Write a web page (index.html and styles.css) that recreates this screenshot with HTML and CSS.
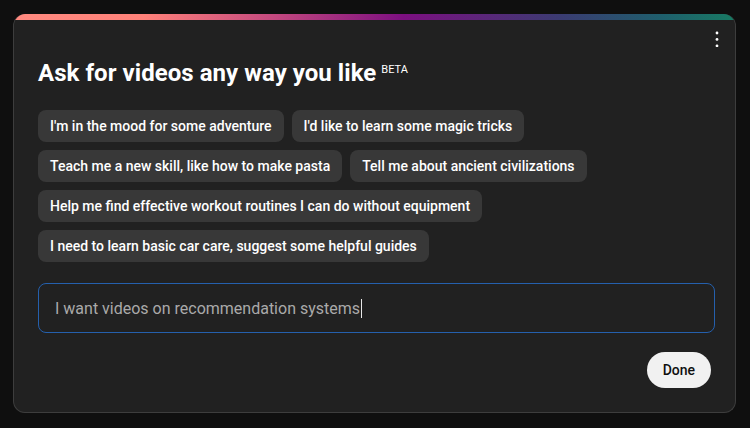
FILE: index.html
```html
<!DOCTYPE html>
<html>
<head>
<meta charset="utf-8">
<link rel="stylesheet" href="styles.css">
</head>
<body>
<div class="card">
  <div class="bar"></div>
  <button class="kebab" aria-label="More">
    <svg width="4" height="16" viewBox="0 0 4 16"><circle cx="2" cy="2" r="1.4" fill="#fff"/><circle cx="2" cy="8.4" r="1.4" fill="#fff"/><circle cx="2" cy="14.8" r="1.4" fill="#fff"/></svg>
  </button>
  <div class="body">
    <h1 class="title">Ask for videos any way you like<sup class="beta">BETA</sup></h1>
    <div class="chips">
      <span class="chip">I'm in the mood for some adventure</span>
      <span class="chip">I'd like to learn some magic tricks</span>
      <span class="chip">Teach me a new skill, like how to make pasta</span>
      <span class="chip">Tell me about ancient civilizations</span>
      <span class="chip">Help me find effective workout routines I can do without equipment</span>
      <span class="chip">I need to learn basic car care, suggest some helpful guides</span>
    </div>
    <div class="input"><span class="value">I want videos on recommendation systems</span><span class="caret"></span></div>
    <div class="actions"><button class="done">Done</button></div>
  </div>
</div>
</body>
</html>
```
FILE: styles.css
```css
html, body { margin: 0; padding: 0; }
body {
  background: #0f0f0f;
  font-family: Roboto, "Liberation Sans", sans-serif;
  color: #fff;
  width: 750px;
  height: 428px;
  overflow: hidden;
  padding: 14px 0 0 13px;
  box-sizing: border-box;
}
.card {
  position: relative;
  width: 723px;
  height: 399px;
  box-sizing: border-box;
  background: #212121;
  border: 1px solid #3d3d3d;
  border-top: none;
  border-radius: 12px;
  overflow: hidden;
}
.bar {
  height: 6px;
  background: linear-gradient(to right, #ff8a80 0%, #ff8179 18%, #c4497f 36%, #7c0f80 54%, #3a3c72 76%, #1e5f6c 90%, #187a63 100%);
}
.kebab {
  position: absolute;
  top: 17px;
  right: 16px;
  background: none;
  border: none;
  padding: 0;
  display: flex;
}
.body {
  padding: 0 20px 0 24px;
}
.title {
  margin: 38px 0 0;
  font-size: 24px;
  font-weight: 700;
  line-height: 30px;
  letter-spacing: 0.05px;
}
.beta {
  font-size: 11px;
  font-weight: 400;
  vertical-align: top;
  position: relative;
  top: -3px;
  margin-left: 5px;
  letter-spacing: 0;
}
.chips {
  margin-top: 22px;
  display: flex;
  flex-wrap: wrap;
  gap: 8px;
}
.chip {
  background: #383838;
  border-radius: 8px;
  height: 32px;
  line-height: 32px;
  padding: 0 12px;
  font-size: 14px;
  font-weight: 500;
  white-space: nowrap;
}
.input {
  margin-top: 21px;
  height: 50px;
  box-sizing: border-box;
  border: 1px solid #2560ad;
  border-radius: 8px;
  padding: 0 16px;
  display: flex;
  align-items: center;
  font-size: 16px;
  color: #aaaaaa;
}
.caret {
  display: inline-block;
  width: 1px;
  height: 19px;
  background: #e8e8e8;
  margin-left: 1px;
}
.actions {
  display: flex;
  justify-content: flex-end;
  margin-top: 19px;
  padding-right: 4px;
}
.done {
  height: 36px;
  padding: 0 16px;
  border: none;
  border-radius: 18px;
  background: #f1f1f1;
  color: #0f0f0f;
  font-family: Roboto, "Liberation Sans", sans-serif;
  font-size: 14px;
  font-weight: 500;
}
```
